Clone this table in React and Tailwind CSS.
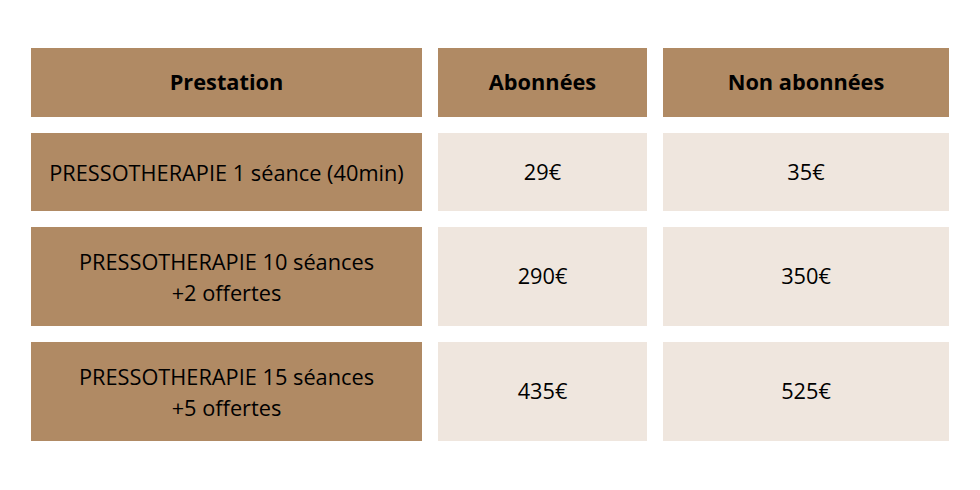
import React from "react";

const rows = [
  { label: ["PRESSOTHERAPIE 1 séance (40min)"], abo: "29€", non: "35€", h: "h-[78px]" },
  { label: ["PRESSOTHERAPIE 10 séances", "+2 offertes"], abo: "290€", non: "350€", h: "h-[99px]" },
  { label: ["PRESSOTHERAPIE 15 séances", "+5 offertes"], abo: "435€", non: "525€", h: "h-[99px]" },
];

const App = () => {
  return (
    <div
      className="w-[980px] h-[490px] bg-white pt-[48px] pl-[31px] text-black"
      style={{ fontFamily: "'Open Sans', 'Noto Sans', sans-serif" }}
    >
      <div className="grid grid-cols-[391px_209px_286px] gap-4">
        <div className="h-[69px] bg-[#b08a64] flex items-center justify-center text-[21.75px] font-bold">
          Prestation
        </div>
        <div className="h-[69px] bg-[#b08a64] flex items-center justify-center text-[21.75px] font-bold">
          Abonnées
        </div>
        <div className="h-[69px] bg-[#b08a64] flex items-center justify-center text-[21.75px] font-bold">
          Non abonnées
        </div>
        {rows.map((row, i) => (
          <React.Fragment key={i}>
            <div className={`${row.h} bg-[#b08a64] flex flex-col items-center justify-center text-[21.75px] leading-[31px] text-center`}>
              {row.label.map((l) => (
                <span key={l}>{l}</span>
              ))}
            </div>
            <div className={`${row.h} bg-[#efe6de] flex items-center justify-center text-[21.75px]`}>
              {row.abo}
            </div>
            <div className={`${row.h} bg-[#efe6de] flex items-center justify-center text-[21.75px]`}>
              {row.non}
            </div>
          </React.Fragment>
        ))}
      </div>
    </div>
  );
};

export default App;
